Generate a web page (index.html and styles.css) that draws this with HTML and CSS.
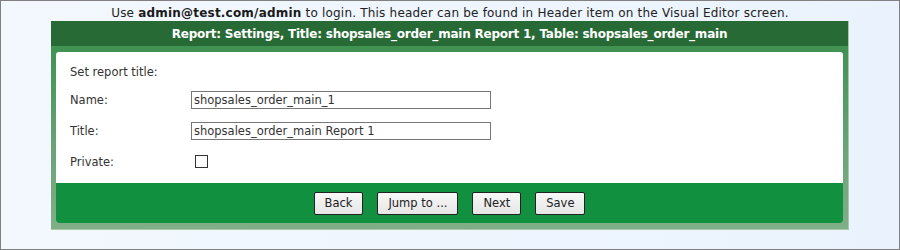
FILE: index.html
```html
<!DOCTYPE html>
<html>
<head>
<meta charset="utf-8">
<link rel="stylesheet" href="styles.css">
</head>
<body>
<div class="page">
  <div class="notice">Use <b>admin@test.com/admin</b> to login. This header can be found in Header item on the Visual Editor screen.</div>
  <div class="panel">
    <div class="panel-head">Report: Settings, Title: shopsales_order_main Report 1, Table: shopsales_order_main</div>
    <div class="panel-body">
      <div class="card">
        <div class="content">
          <div class="intro">Set report title:</div>
          <div class="row"><label class="lbl">Name:</label><input class="txt" type="text" value="shopsales_order_main_1"></div>
          <div class="row"><label class="lbl">Title:</label><input class="txt" type="text" value="shopsales_order_main Report 1"></div>
          <div class="row"><label class="lbl">Private:</label><span class="chk"></span></div>
        </div>
        <div class="footer">
          <button class="btn">Back</button>
          <button class="btn">Jump to ...</button>
          <button class="btn">Next</button>
          <button class="btn">Save</button>
        </div>
      </div>
    </div>
  </div>
</div>
</body>
</html>
```
FILE: styles.css
```css
* { box-sizing: border-box; }
html, body { margin: 0; padding: 0; }
body { font-family: "DejaVu Sans", Verdana, sans-serif; }
.page {
  width: 900px;
  height: 250px;
  border: 1px solid #808080;
  background: linear-gradient(to right, #f3f8fe, #eaf3fd);
}
.notice {
  height: 20px;
  line-height: 24px;
  text-align: center;
  font-size: 12px;
  letter-spacing: 0.2px;
  color: #222;
}
.notice b { font-weight: bold; color: #1a1a1a; }
.panel {
  margin: 0 50px 0 50px;
  width: 798px;
  border-right: 1px solid #a8c8ad;
  border-bottom: 1px solid #a8c8ad;
}
.panel-head {
  height: 25px;
  line-height: 26px;
  background: #286a36;
  color: #fff;
  font-weight: bold;
  font-size: 12px;
  letter-spacing: -0.22px;
  text-align: center;
}
.panel-body {
  padding: 6px 5px 6px 5px;
  background: linear-gradient(to bottom, #3f9251, #6ea47a 60%, #80ae87);
}
.card {
  background: #fff;
  border-radius: 3px;
  overflow: hidden;
}
.content {
  padding: 12px 14px 6px 14px;
  font-size: 11.5px;
  color: #333;
}
.intro { line-height: 16px; margin-bottom: 4px; }
.row {
  height: 31px;
  display: flex;
  align-items: center;
}
.lbl { width: 121px; }
.txt {
  width: 300px;
  height: 18px;
  border: 1px solid #777;
  padding: 0 2px;
  font-family: inherit;
  font-size: 11.5px;
  color: #333;
  margin: 0;
}
.chk {
  width: 13px;
  height: 13px;
  border: 1px solid #333;
  margin-left: 4px;
  background: #fff;
}
.footer {
  height: 40px;
  background: #11913f;
  display: flex;
  justify-content: center;
  align-items: center;
  gap: 14px;
}
.btn {
  height: 23px;
  padding: 0 10px;
  font-family: inherit;
  font-size: 11.5px;
  color: #222;
  border: 1px solid #222;
  border-radius: 2px;
  background: linear-gradient(to bottom, #f8f8f8, #e6e6e6);
}
```
